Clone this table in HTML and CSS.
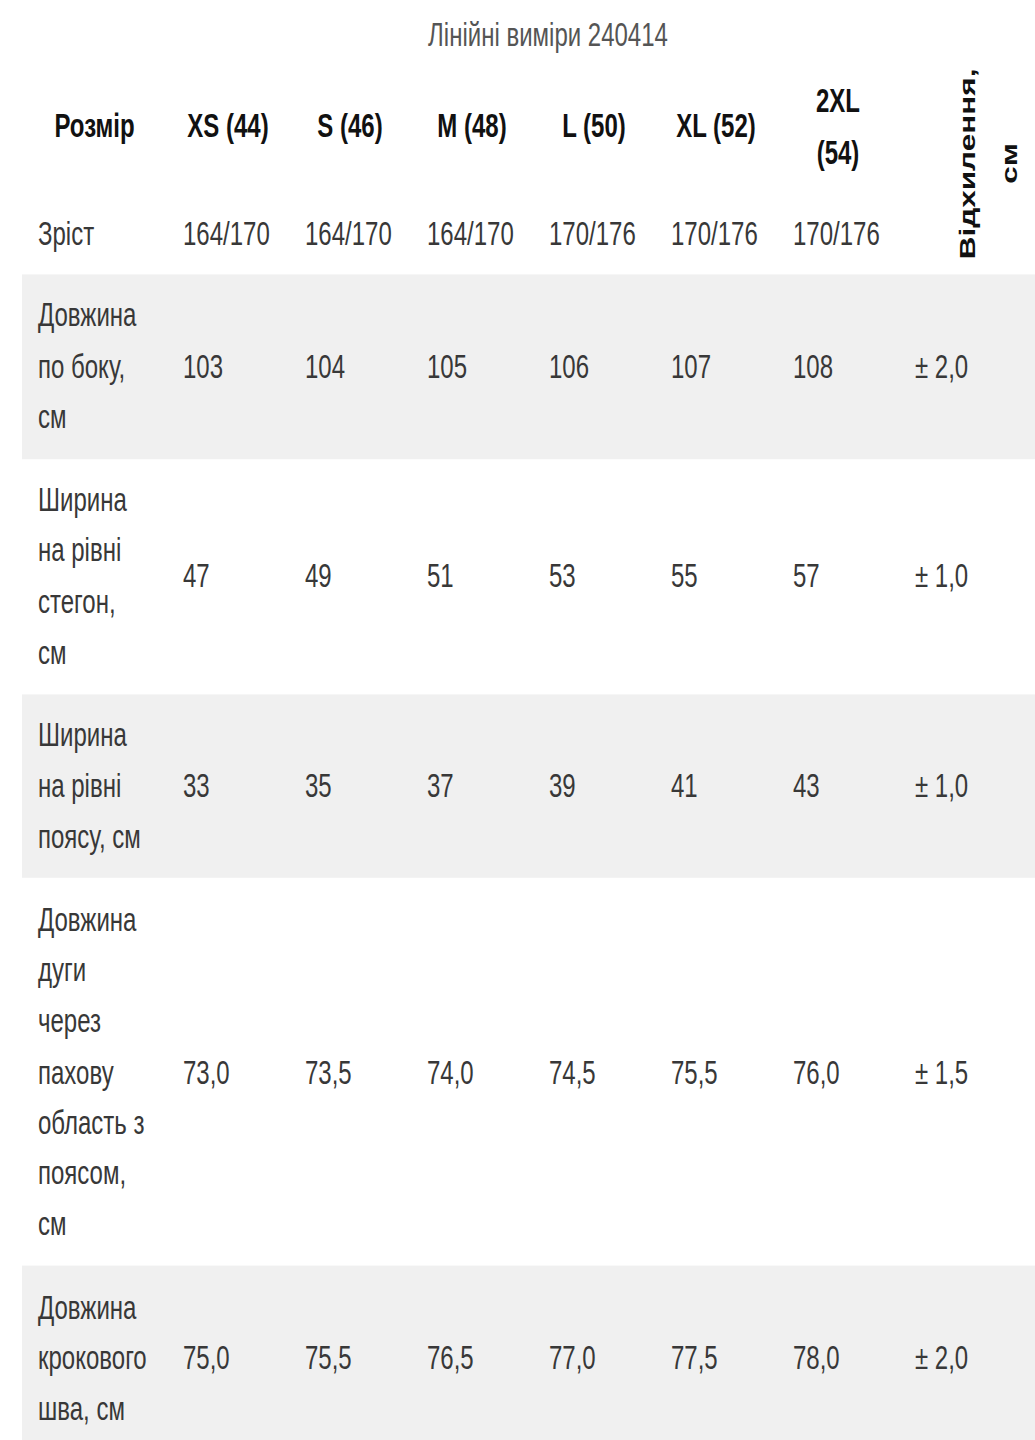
FILE: index.html
```html
<!DOCTYPE html>
<html lang="uk">
<head>
<meta charset="utf-8">
<title>Лінійні виміри 240414</title>
<link rel="stylesheet" href="styles.css">
</head>
<body>
<div class="sheet">
  <table class="sizes">
    <caption>Лінійні виміри 240414</caption>
    <colgroup>
      <col class="c-name">
      <col class="c-size"><col class="c-size"><col class="c-size">
      <col class="c-size"><col class="c-size"><col class="c-size">
      <col class="c-dev">
    </colgroup>
    <thead>
      <tr class="head">
        <th>Розмір</th>
        <th>XS (44)</th>
        <th>S (46)</th>
        <th>M (48)</th>
        <th>L (50)</th>
        <th>XL (52)</th>
        <th>2XL<br>(54)</th>
        <th rowspan="2" class="dev"><span class="vert">Відхилення,<br>см</span></th>
      </tr>
      <tr class="height">
        <td>Зріст</td>
        <td>164/170</td>
        <td>164/170</td>
        <td>164/170</td>
        <td>170/176</td>
        <td>170/176</td>
        <td>170/176</td>
      </tr>
    </thead>
    <tbody>
      <tr class="shade">
        <td>Довжина<br>по боку,<br>см</td>
        <td>103</td><td>104</td><td>105</td><td>106</td><td>107</td><td>108</td>
        <td>± 2,0</td>
      </tr>
      <tr>
        <td>Ширина<br>на рівні<br>стегон,<br>см</td>
        <td>47</td><td>49</td><td>51</td><td>53</td><td>55</td><td>57</td>
        <td>± 1,0</td>
      </tr>
      <tr class="shade">
        <td>Ширина<br>на рівні<br>поясу, см</td>
        <td>33</td><td>35</td><td>37</td><td>39</td><td>41</td><td>43</td>
        <td>± 1,0</td>
      </tr>
      <tr>
        <td>Довжина<br>дуги<br>через<br>пахову<br>область з<br>поясом,<br>см</td>
        <td>73,0</td><td>73,5</td><td>74,0</td><td>74,5</td><td>75,5</td><td>76,0</td>
        <td>± 1,5</td>
      </tr>
      <tr class="shade">
        <td>Довжина<br>крокового<br>шва, см</td>
        <td>75,0</td><td>75,5</td><td>76,5</td><td>77,0</td><td>77,5</td><td>78,0</td>
        <td>± 2,0</td>
      </tr>
    </tbody>
  </table>
</div>
</body>
</html>
```
FILE: styles.css
```css
html {
  overflow-x: hidden;
}

body {
  margin: 0;
  min-height: 1440px;
  background: #ffffff;
  font-family: "Liberation Sans", Arial, sans-serif;
}

/* the reference sheet is stretched vertically */
.sheet {
  padding-left: 22px;
  transform: scaleY(1.4);
  transform-origin: 0 0;
}

.sizes {
  border-collapse: collapse;
  table-layout: fixed;
  width: 1052px;
  font-size: 24px;
  line-height: 36.3px;
  color: #383838;
}

.sizes caption {
  color: #555555;
  padding-top: 7.1px;
  line-height: 35.8px;
  text-align: center;
}

.c-name { width: 145px; }
.c-size { width: 122px; }
.c-dev { width: 175px; }

.sizes th,
.sizes td {
  padding: 11.4px 16px;
  text-align: left;
  vertical-align: middle;
  font-weight: normal;
}

.head th {
  font-weight: bold;
  color: #111111;
  text-align: center;
}

.height td {
  padding-top: 10.7px;
  padding-bottom: 10.7px;
}

.shade {
  background: #f0f0f0;
}

.sizes .dev {
  padding: 5px 0 0 4px;
  text-align: center;
}

.vert {
  display: inline-block;
  writing-mode: vertical-rl;
  transform: rotate(180deg);
  font-size: 22.5px;
  line-height: 42px;
  font-weight: bold;
  color: #111111;
  text-align: center;
}
```
